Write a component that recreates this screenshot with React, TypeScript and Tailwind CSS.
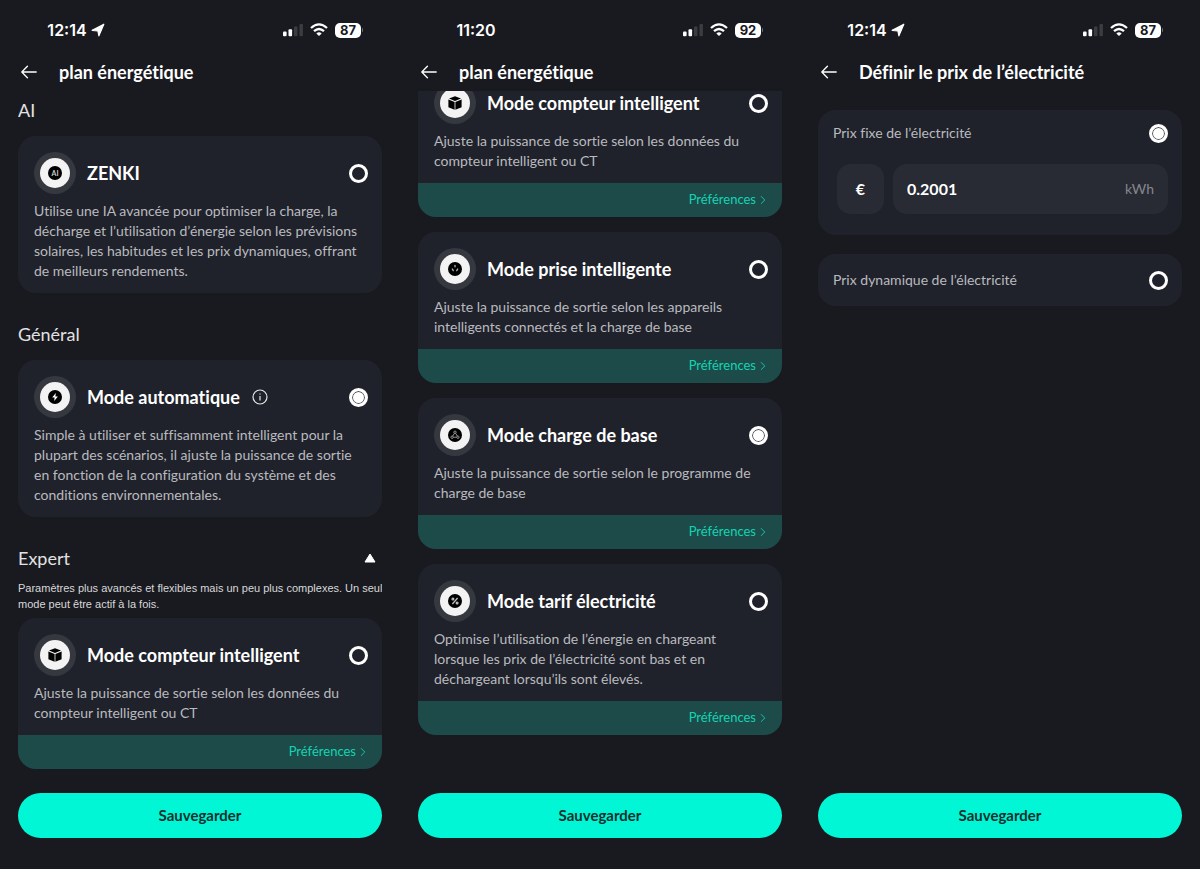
import { useState, type ReactNode } from "react";
import { ChevronRight } from "lucide-react";

type IconName = "ai" | "bolt" | "cube" | "socket" | "nodes" | "percent";

interface Mode {
  id: string;
  title: string;
  text: string;
  icon: IconName;
  info?: boolean;
  preferences?: boolean;
}

const ZENKI: Mode = {
  id: "zenki",
  title: "ZENKI",
  icon: "ai",
  text: "Utilise une IA avancée pour optimiser la charge, la décharge et l’utilisation d’énergie selon les prévisions solaires, les habitudes et les prix dynamiques, offrant de meilleurs rendements.",
};

const AUTO: Mode = {
  id: "auto",
  title: "Mode automatique",
  icon: "bolt",
  info: true,
  text: "Simple à utiliser et suffisamment intelligent pour la plupart des scénarios, il ajuste la puissance de sortie en fonction de la configuration du système et des conditions environnementales.",
};

const METER: Mode = {
  id: "meter",
  title: "Mode compteur intelligent",
  icon: "cube",
  preferences: true,
  text: "Ajuste la puissance de sortie selon les données du compteur intelligent ou CT",
};

const EXPERT_MODES: Mode[] = [
  METER,
  {
    id: "plug",
    title: "Mode prise intelligente",
    icon: "socket",
    preferences: true,
    text: "Ajuste la puissance de sortie selon les appareils intelligents connectés et la charge de base",
  },
  {
    id: "base",
    title: "Mode charge de base",
    icon: "nodes",
    preferences: true,
    text: "Ajuste la puissance de sortie selon le programme de charge de base",
  },
  {
    id: "tariff",
    title: "Mode tarif électricité",
    icon: "percent",
    preferences: true,
    text: "Optimise l’utilisation de l’énergie en chargeant lorsque les prix de l’électricité sont bas et en déchargeant lorsqu’ils sont élevés.",
  },
];

function ModeGlyph({ name }: { name: IconName }) {
  if (name === "ai") {
    return (
      <span className="flex size-[14px] items-center justify-center rounded-full bg-black text-[7px] leading-none font-bold text-[#cfcfcf]">
        AI
      </span>
    );
  }
  if (name === "cube") {
    return (
      <svg viewBox="0 0 14 14" className="size-[14px]" aria-hidden="true">
        <path d="M7 0.3 13 2.6 7 5 1 2.6Z" fill="#000" />
        <path d="M0.4 3.5 6.6 5.9V13.8L0.4 11.2Z" fill="#000" />
        <path d="M13.6 3.5 7.4 5.9V13.8L13.6 11.2Z" fill="#000" />
      </svg>
    );
  }
  return (
    <svg viewBox="0 0 14 14" className="size-[14px]" fill="none" aria-hidden="true">
      <circle cx="7" cy="7" r="7" fill="#000" />
      {name === "bolt" && <path d="M7.8 3 4.2 7.6H6.6L6.2 11 9.9 6.4H7.4Z" fill="#fff" />}
      {name === "socket" && (
        <g stroke="#aaa" strokeWidth="1.4" strokeLinecap="round">
          <path d="M7 3.4V4.8" />
          <path d="M4.3 7 5.3 8.6" />
          <path d="M9.7 7 8.7 8.6" />
        </g>
      )}
      {name === "nodes" && (
        <g stroke="#a0a0a0" strokeWidth="0.9">
          <circle cx="7" cy="4.2" r="1.2" />
          <circle cx="4.1" cy="9.2" r="1.2" />
          <circle cx="9.9" cy="9.2" r="1.2" />
          <path d="M6.4 5.3 4.7 8.1M7.6 5.3 9.3 8.1M5.3 9.2H8.7" />
        </g>
      )}
      {name === "percent" && (
        <g stroke="#c4c4c4" strokeWidth="1.2">
          <path d="M9.6 4 4.4 10" />
          <circle cx="4.9" cy="5.1" r="0.9" />
          <circle cx="9.1" cy="8.9" r="0.9" />
        </g>
      )}
    </svg>
  );
}

function Radio({ id, name, checked, onChange }: { id: string; name: string; checked: boolean; onChange: () => void }) {
  return (
    <input
      type="radio"
      id={id}
      name={name}
      checked={checked}
      onChange={onChange}
      className="size-[19px] shrink-0 appearance-none rounded-full border-3 border-white checked:bg-white checked:shadow-[inset_0_0_0_1px_#4a4b52]"
    />
  );
}

function StatusBar({ time, battery, located }: { time: string; battery: number; located?: boolean }) {
  return (
    <div className="flex h-[60px] items-center justify-between pr-[19px] font-[Inter,sans-serif] text-white">
      <div className="flex w-[116px] items-center justify-center gap-1">
        <span className="text-base font-semibold">{time}</span>
        {located && (
          <svg viewBox="0 0 14 14" className="size-[14px]" aria-hidden="true">
            <path d="M12.8 1.2 1.2 7.4 6.9 8 7.9 12.8Z" fill="#fff" stroke="#fff" strokeWidth="1.2" strokeLinejoin="round" />
          </svg>
        )}
      </div>
      <div className="flex items-center gap-[7px]">
        <svg viewBox="0 0 20 14" className="h-[14px] w-5" aria-hidden="true">
          <rect x="0" y="8.6" width="3.6" height="4.6" rx="1" fill="#fff" />
          <rect x="5.5" y="6.2" width="3.6" height="7" rx="1" fill="#fff" />
          <rect x="11" y="3.6" width="3.4" height="9.6" rx="1" fill="#3c3d42" />
          <rect x="16.5" y="1" width="3.4" height="12.2" rx="1" fill="#3c3d42" />
        </svg>
        <svg viewBox="0 0 18 14" className="h-[14px] w-[18px]" fill="none" stroke="#fff" strokeWidth="2.3" aria-hidden="true">
          <path d="M1 5Q9 -2.2 17 5" />
          <path d="M4 8.2Q9 3.8 14 8.2" />
          <path d="M9 13 6.3 10.4Q9 8.2 11.7 10.4Z" fill="#fff" stroke="none" />
        </svg>
        <div className="flex items-center gap-px">
          <span className="flex h-[15px] w-[26px] items-center justify-center rounded-[5px] bg-white text-[13px] leading-none font-bold text-[#191a1f]">
            {battery}
          </span>
          <span className="h-1 w-px rounded-r bg-[#6c6d72]" />
        </div>
      </div>
    </div>
  );
}

interface ScreenProps {
  time: string;
  battery: number;
  located?: boolean;
  title: string;
  children: ReactNode;
}

function Screen({ time, battery, located, title, children }: ScreenProps) {
  return (
    <section className="flex min-h-screen flex-col px-[18px] pb-[31px]">
      <StatusBar time={time} battery={battery} located={located} />
      <header className="mb-[7px] flex h-6 items-center gap-[22px] pl-[3px]">
        <button type="button" aria-label="Retour">
          <svg viewBox="0 0 16 14" className="h-[14px] w-4" fill="none" stroke="#fff" strokeWidth="1.3" strokeLinecap="round" strokeLinejoin="round" aria-hidden="true">
            <path d="M15.2 7H0.8M6.4 1.2 0.8 7 6.4 12.8" />
          </svg>
        </button>
        <h1 className="text-lg leading-6 font-bold text-white">{title}</h1>
      </header>
      <main className="flex-1 overflow-hidden">{children}</main>
      <button type="button" className="h-[45px] rounded-full bg-[#00f6d5] text-[15px] font-bold text-[#12302f]">
        Sauvegarder
      </button>
    </section>
  );
}

function ModeCard({ mode, group, value, onSelect }: { mode: Mode; group: string; value: string; onSelect: (id: string) => void }) {
  const id = `${group}-${mode.id}`;
  return (
    <article className="overflow-hidden rounded-[18px] bg-[#20222b]">
      <div className="pt-4 pr-[14px] pb-3 pl-4">
        <div className="flex items-center">
          <span className="mr-[11px] flex size-[42px] shrink-0 items-center justify-center rounded-full bg-[#363840]">
            <span className="flex size-[30px] items-center justify-center rounded-full bg-[#f3f3f3]">
              <ModeGlyph name={mode.icon} />
            </span>
          </span>
          <label htmlFor={id} className="text-lg leading-6 font-bold text-white">
            {mode.title}
          </label>
          {mode.info && (
            <button type="button" aria-label="Informations" className="ml-3">
              <svg viewBox="0 0 16 16" className="size-4" fill="none" stroke="#e6e6e8" strokeWidth="1.2" aria-hidden="true">
                <circle cx="8" cy="8" r="7" />
                <path d="M8 7V11.6M8 4.4V5.6" />
              </svg>
            </button>
          )}
          <span className="ml-auto flex">
            <Radio id={id} name={group} checked={value === mode.id} onChange={() => onSelect(mode.id)} />
          </span>
        </div>
        <p className="mt-[7px] pr-1 text-sm leading-5 text-[#b9babf]">{mode.text}</p>
      </div>
      {mode.preferences && (
        <div className="flex h-[34px] items-center justify-end bg-[#1c4b4a] pr-3">
          <button type="button" className="flex items-center text-[13px] text-[#14d3b2]">
            Préférences
            <ChevronRight className="size-3.5" strokeWidth={1.5} />
          </button>
        </div>
      )}
    </article>
  );
}

function PlanOverview() {
  const [mode, setMode] = useState("auto");
  return (
    <Screen time="12:14" battery={87} located title="plan énergétique">
      <h2 className="mt-[7px] mb-[14px] text-lg leading-6 text-[#e2e2e4]">AI</h2>
      <ModeCard mode={ZENKI} group="plan" value={mode} onSelect={setMode} />
      <h2 className="mt-[29px] mb-[14px] text-lg leading-6 text-[#e2e2e4]">Général</h2>
      <ModeCard mode={AUTO} group="plan" value={mode} onSelect={setMode} />
      <div className="mt-[29px] flex items-center justify-between pr-1.5">
        <h2 className="text-lg leading-6 text-[#e2e2e4]">Expert</h2>
        <button type="button" aria-label="Replier">
          <svg viewBox="0 0 12 10" className="h-[10px] w-3" aria-hidden="true">
            <path d="M6 1 11 9H1Z" fill="#fff" stroke="#fff" strokeLinejoin="round" />
          </svg>
        </button>
      </div>
      <p className="-mr-2 mt-2.5 mb-1.5 font-['Liberation_Sans',sans-serif] text-[11px] leading-4 text-[#d8d8da]">
        Paramètres plus avancés et flexibles mais un peu plus complexes. Un seul mode peut être actif à la fois.
      </p>
      <ModeCard mode={METER} group="plan" value={mode} onSelect={setMode} />
    </Screen>
  );
}

function ExpertModes() {
  const [mode, setMode] = useState("base");
  return (
    <Screen time="11:20" battery={92} title="plan énergétique">
      {/* list is scrolled part of the way under the header */}
      <div className="-mt-[25px] flex flex-col gap-[15px]">
        {EXPERT_MODES.map((m) => (
          <ModeCard key={m.id} mode={m} group="expert" value={mode} onSelect={setMode} />
        ))}
      </div>
    </Screen>
  );
}

function PriceSettings() {
  const [kind, setKind] = useState("fixed");
  const [price, setPrice] = useState("0.2001");
  return (
    <Screen time="12:14" battery={87} located title="Définir le prix de l’électricité">
      <div className="mt-[19px] rounded-[18px] bg-[#20222b] pt-[13px] pr-[14px] pb-[21px] pl-[15px]">
        <div className="flex items-center justify-between">
          <label htmlFor="price-fixed" className="text-sm leading-5 text-[#b9babf]">
            Prix fixe de l’électricité
          </label>
          <Radio id="price-fixed" name="price" checked={kind === "fixed"} onChange={() => setKind("fixed")} />
        </div>
        <div className="mt-[21px] flex gap-[9px] pl-1">
          <span className="flex h-[50px] w-[47px] items-center justify-center rounded-[14px] bg-[#292b34] text-base font-bold text-white">€</span>
          <div className="flex h-[50px] flex-1 items-center rounded-[14px] bg-[#292b34] px-[14px]">
            <input
              type="text"
              inputMode="decimal"
              aria-label="Prix"
              value={price}
              onChange={(e) => setPrice(e.target.value)}
              className="w-0 flex-1 bg-transparent text-base font-bold text-white outline-none"
            />
            <span className="text-sm text-[#85868d]">kWh</span>
          </div>
        </div>
      </div>
      <div className="mt-[19px] flex items-center justify-between rounded-[18px] bg-[#20222b] py-4 pr-[14px] pl-[15px]">
        <label htmlFor="price-dynamic" className="text-sm leading-5 text-[#b9babf]">
          Prix dynamique de l’électricité
        </label>
        <Radio id="price-dynamic" name="price" checked={kind === "dynamic"} onChange={() => setKind("dynamic")} />
      </div>
    </Screen>
  );
}

export default function App() {
  return (
    <div className="grid min-h-screen grid-cols-3 bg-[#191a1f] font-[Lato,sans-serif] [font-variant-ligatures:no-common-ligatures]">
      <PlanOverview />
      <ExpertModes />
      <PriceSettings />
    </div>
  );
}
